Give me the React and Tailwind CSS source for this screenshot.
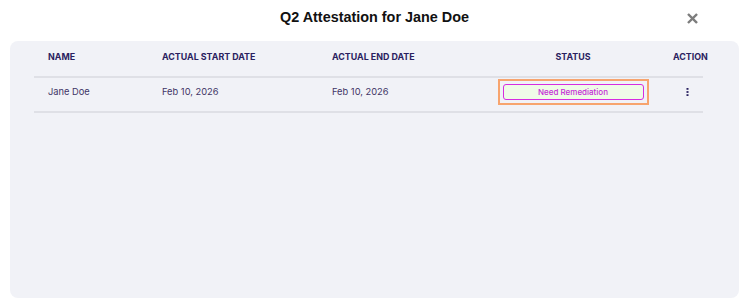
export default function App() {
  const rows = [
    { name: "Jane Doe", start: "Feb 10, 2026", end: "Feb 10, 2026", status: "Need Remediation" },
  ];

  return (
    <div className="w-[749px] h-[304px] bg-white flex flex-col" style={{ fontFamily: "Inter, 'Noto Sans', sans-serif" }}>
      {/* header */}
      <div className="relative h-[41px] flex items-start justify-center pt-[9px]">
        <h2
          className="text-[14.4px] leading-[17px] font-bold text-[#111]"
          style={{ fontFamily: "'Liberation Sans', Arial, sans-serif" }}
        >
          Q2 Attestation for Jane Doe
        </h2>
        <button className="absolute left-[686px] top-[12px] w-[12px] h-[12px] flex items-center justify-center">
          <svg width="11" height="11" viewBox="0 0 12 12">
            <path d="M2 2 L10 10 M10 2 L2 10" stroke="#7d7d7d" strokeWidth="2.6" strokeLinecap="square" />
          </svg>
        </button>
      </div>

      {/* panel */}
      <div className="mx-[10px] h-[257px] bg-[#f1f2f7] rounded-lg pl-[24px]">
        <div className="w-[669px]">
          <div className="flex items-start h-[37px] pt-[10px] border-b-2 border-[#dfe0e6] text-[8.9px] leading-[12px] font-bold text-[#2a2160] uppercase">
            <div className="w-[114px] pl-[14px]">Name</div>
            <div className="w-[170px] pl-[14px]">Actual Start Date</div>
            <div className="w-[165px] pl-[14px]">Actual End Date</div>
            <div className="w-[180px] text-center">Status</div>
            <div className="w-[40px] pl-[10px] whitespace-nowrap">Action</div>
          </div>
          {rows.map((r, i) => (
            <div key={i} className="flex items-start h-[35px] pt-[1px] border-b-2 border-[#dfe0e6] text-[9.3px] text-[#3f3566]">
              <div className="w-[114px] pl-[14px] h-[25px] flex items-center">{r.name}</div>
              <div className="w-[170px] pl-[14px] h-[25px] flex items-center">{r.start}</div>
              <div className="w-[165px] pl-[14px] h-[25px] flex items-center">{r.end}</div>
              <div className="w-[180px] flex justify-center">
                <div className="w-[151px] h-[26px] border-2 border-[#f7a46e] p-[3px]">
                  <div className="h-full rounded-[3px] border border-[#d62de0] bg-[#effbe8] flex items-center justify-center text-[8px] font-medium text-[#c42bd6]">
                    {r.status}
                  </div>
                </div>
              </div>
              <div className="w-[40px] h-[26px] pl-[23px] flex items-center">
                <svg width="3" height="8" viewBox="0 0 3 8">
                  <rect x="0.5" y="0" width="2" height="1.8" fill="#2a2160" />
                  <rect x="0.5" y="3.1" width="2" height="1.8" fill="#2a2160" />
                  <rect x="0.5" y="6.2" width="2" height="1.8" fill="#2a2160" />
                </svg>
              </div>
            </div>
          ))}
        </div>
      </div>
    </div>
  );
}
